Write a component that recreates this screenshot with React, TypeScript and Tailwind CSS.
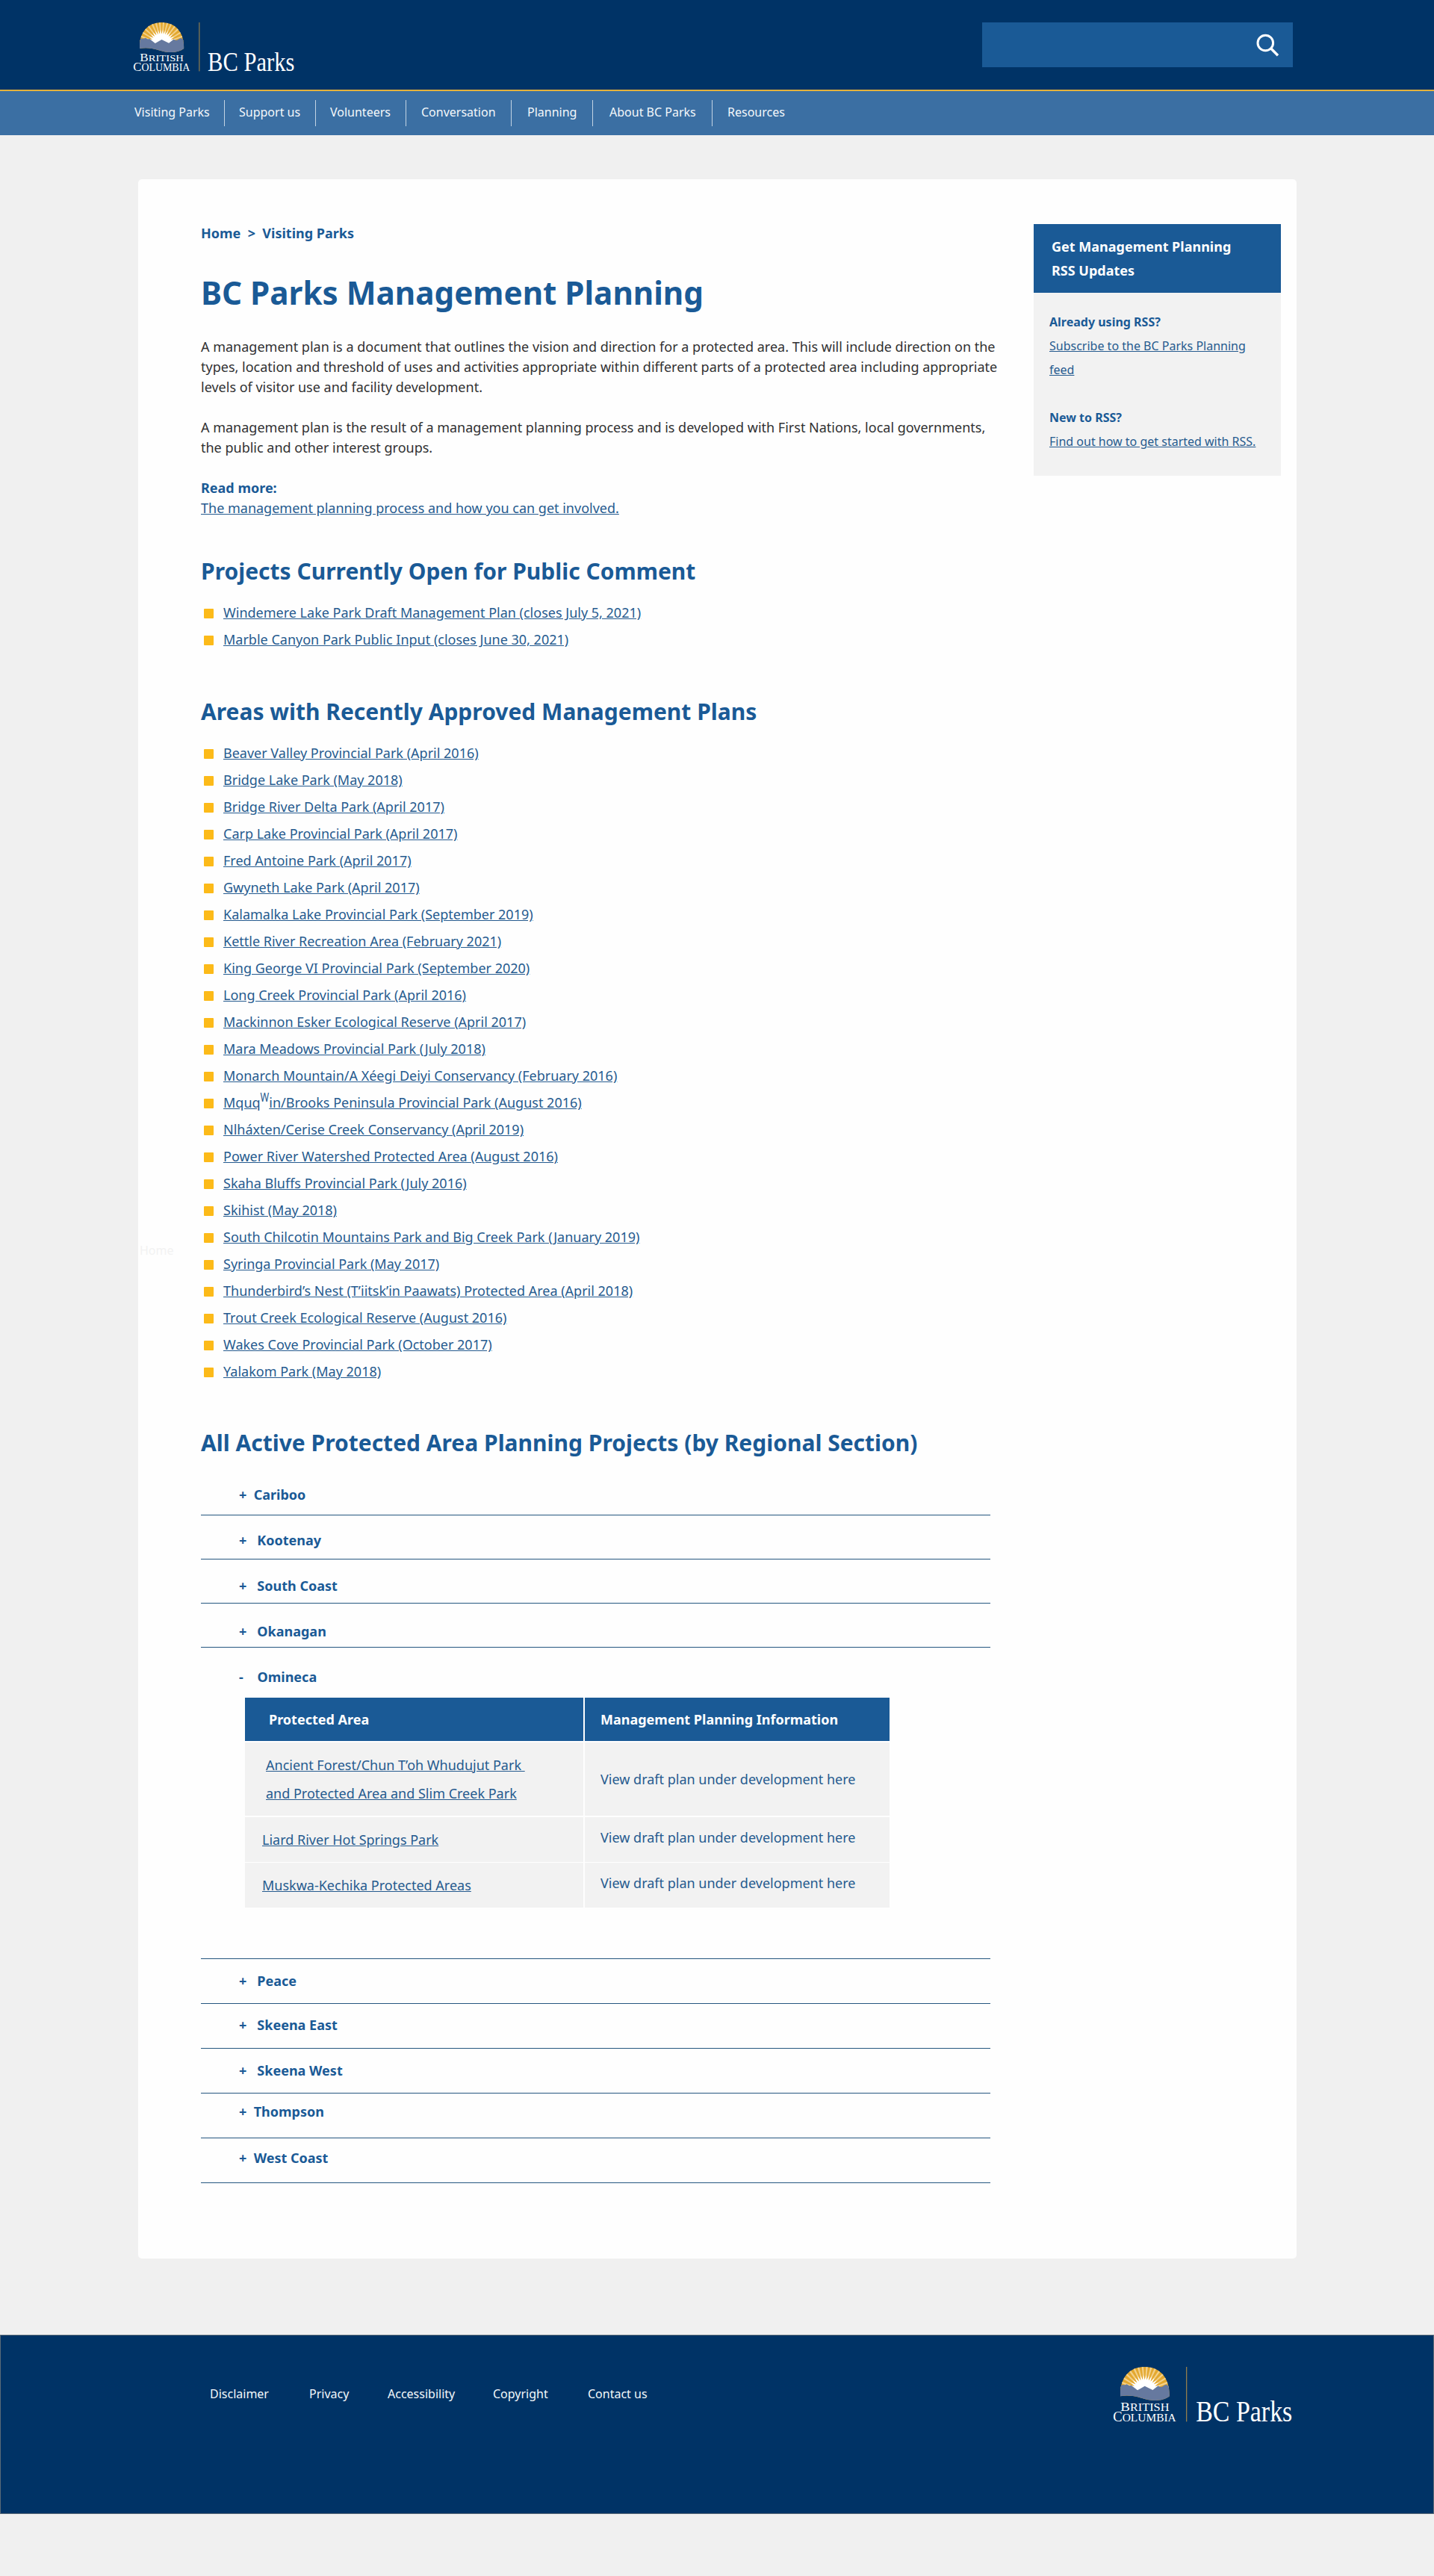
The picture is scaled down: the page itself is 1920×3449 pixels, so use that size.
import React from "react";

const RAY_ANGLES = [-80, -69, -58, -47, -36, -25, -15, -5, 5, 15, 25, 36, 47, 58, 69, 80];

function point(angle: number, radius: number) {
  const a = (angle * Math.PI) / 180;
  return `${(128 + Math.sin(a) * radius).toFixed(1)},${(98 - Math.cos(a) * radius).toFixed(1)}`;
}

const CORE = RAY_ANGLES.map((a, i) => {
  const next = RAY_ANGLES[i + 1] ?? 92;
  return `${point(a, 66)} ${point((a + next) / 2, 46)}`;
}).join(" ");

function Logo({ className }: { className: string }) {
  return (
    <svg viewBox="0 0 722 222" preserveAspectRatio="none" className={className} fontFamily="'Liberation Serif', serif" fill="#fff">
      <clipPath id="arch">
        <path d="M30 118 C27 50 62 0 128 0 C194 0 229 50 227 118 C200 140 155 138 118 126 C80 114 52 114 30 118Z" />
      </clipPath>
      <g clipPath="url(#arch)">
        <rect x="25" y="0" width="206" height="140" fill="#e3a82f" />
        {RAY_ANGLES.map((a) => (
          <polygon key={a} fill="#f3d08a" points={`${point(a - 1.9, 110)} ${point(a + 1.9, 110)} ${point(a + 3.6, 40)} ${point(a - 3.6, 40)}`} />
        ))}
        <polygon fill="#fff" points={`${point(-92, 46)} ${CORE}`} />
        <path
          fill="#66799f"
          d="M20 84 L38 72 L48 73 L56 70 L66 76 L74 74 L99 94 L128 77 L160 93 L182 76 L188 80 L197 80 L206 74 L213 71 L232 80 L232 145 L20 145Z"
        />
      </g>
      <text x="31" y="176" fontSize="50" textLength="195" lengthAdjust="spacingAndGlyphs">
        B<tspan fontSize="43">RITISH</tspan>
      </text>
      <text x="1" y="220" fontSize="55" textLength="253" lengthAdjust="spacingAndGlyphs">
        C<tspan fontSize="46">OLUMBIA</tspan>
      </text>
      <rect x="294" y="0" width="3.4" height="220" fill="#a88a4a" />
      <text x="333" y="220" fontSize="118" textLength="387" lengthAdjust="spacingAndGlyphs">
        BC Parks
      </text>
    </svg>
  );
}

const NAV = [
  { label: "Visiting Parks", cls: "w-[121px]" },
  { label: "Support us", cls: "w-[122px] pl-[19px]" },
  { label: "Volunteers", cls: "w-[121px] pl-[19px]" },
  { label: "Conversation", cls: "w-[141px] pl-5" },
  { label: "Planning", cls: "w-[109px] pl-[21px]" },
  { label: "About BC Parks", cls: "w-[160px] pl-[22px]" },
];

const OPEN_PROJECTS = [
  "Windemere Lake Park Draft Management Plan (closes July 5, 2021)",
  "Marble Canyon Park Public Input (closes June 30, 2021)",
];

const APPROVED: React.ReactNode[] = [
  "Beaver Valley Provincial Park (April 2016)",
  "Bridge Lake Park (May 2018)",
  "Bridge River Delta Park (April 2017)",
  "Carp Lake Provincial Park (April 2017)",
  "Fred Antoine Park (April 2017)",
  "Gwyneth Lake Park (April 2017)",
  "Kalamalka Lake Provincial Park (September 2019)",
  "Kettle River Recreation Area (February 2021)",
  "King George VI Provincial Park (September 2020)",
  "Long Creek Provincial Park (April 2016)",
  "Mackinnon Esker Ecological Reserve (April 2017)",
  "Mara Meadows Provincial Park (July 2018)",
  "Monarch Mountain/A Xéegi Deiyi Conservancy (February 2016)",
  <>
    Mquq<sup className="top-[-7px] mr-[-2px] inline-block origin-bottom-left scale-y-125 align-baseline text-[12.5px] leading-none">W</sup>
    <span className="ml-[2px]">in/Brooks Peninsula Provincial Park (August 2016)</span>
  </>,
  "Nlháxten/Cerise Creek Conservancy (April 2019)",
  "Power River Watershed Protected Area (August 2016)",
  "Skaha Bluffs Provincial Park (July 2016)",
  "Skihist (May 2018)",
  "South Chilcotin Mountains Park and Big Creek Park (January 2019)",
  "Syringa Provincial Park (May 2017)",
  "Thunderbird’s Nest (T’iitsk’in Paawats) Protected Area (April 2018)",
  "Trout Creek Ecological Reserve (August 2016)",
  "Wakes Cove Provincial Park (October 2017)",
  "Yalakom Park (May 2018)",
];

function Link({ children }: { children: React.ReactNode }) {
  return (
    <a href="#" className="whitespace-pre text-[#265b8f] underline">
      {children}
    </a>
  );
}

function Heading({ children, className }: { children: React.ReactNode; className: string }) {
  return <h2 className={`whitespace-nowrap text-[30px] leading-[41px] font-bold text-[#1a5a96] ${className}`}>{children}</h2>;
}

function LinkList({ items }: { items: React.ReactNode[] }) {
  return (
    <ul className="mt-[17px]">
      {items.map((item, i) => (
        <li key={i} className="flex h-9 items-start leading-9">
          <span className="mt-[13px] mr-[13px] ml-1 size-[13px] rounded-[1px] bg-[#fcba19]" />
          <Link>{item}</Link>
        </li>
      ))}
    </ul>
  );
}

function Region({ label, className, children }: { label: string; className: string; children?: React.ReactNode }) {
  return (
    <section className={`w-[1057px] border-b border-[#24567f] ${className}`}>
      <h3 className="pl-[51px] leading-6 font-bold whitespace-pre text-[#1a5a96]">{label}</h3>
      {children}
    </section>
  );
}

function PlanTable() {
  return (
    <div className="mt-4 ml-[59px] grid w-[863px] grid-cols-[453px_408px] gap-x-[2px] leading-6 text-[#265b8f]">
      <div className="h-[58px] bg-[#1a5a96] pt-[17px] pl-8 font-bold text-white">Protected Area</div>
      <div className="h-[58px] bg-[#1a5a96] pt-[17px] pl-[21px] font-bold text-white">Management Planning Information</div>
      <div className="mt-[2px] h-[98px] bg-[#f2f2f2] pt-[11px] pl-7 leading-[38px]">
        <Link>{"Ancient Forest/Chun T’oh Whudujut Park\u00a0\nand Protected Area and Slim Creek Park"}</Link>
      </div>
      <div className="mt-[2px] h-[98px] bg-[#f2f2f2] pt-[37px] pl-[21px]">View draft plan under development here</div>
      <div className="mt-[2px] h-[60px] bg-[#f2f2f2] pt-[18px] pl-[23px]">
        <Link>Liard River Hot Springs Park</Link>
      </div>
      <div className="mt-[2px] h-[60px] bg-[#f2f2f2] pt-[15px] pl-[21px]">View draft plan under development here</div>
      <div className="mt-px h-[60px] bg-[#f2f2f2] pt-[18px] pl-[23px]">
        <Link>Muskwa-Kechika Protected Areas</Link>
      </div>
      <div className="mt-px h-[60px] bg-[#f2f2f2] pt-[15px] pl-[21px]">View draft plan under development here</div>
    </div>
  );
}

export default function App() {
  return (
    <div className="h-[3449px] w-[1920px] bg-[#f0f0f0] font-['Noto_Sans',sans-serif]">
      <header>
        <div className="flex h-[122px] items-start justify-between border-b-2 border-[#e3b13c] bg-[#003366] pt-[30px] pr-[189px] pl-[178px]">
          <Logo className="h-[66px] w-[217px] overflow-visible" />
          <div className="flex h-[60px] w-[416px] justify-end bg-[#1a5a96] pt-[15px] pr-[18px]">
            <svg viewBox="0 0 31 31" className="size-[31px] text-white" fill="none" stroke="currentColor" strokeWidth="3">
              <circle cx="12.3" cy="12.5" r="10.3" />
              <path d="M19.8 20 L29 29.2" strokeWidth="3.4" />
            </svg>
          </div>
        </div>
        <nav className="flex h-[59px] bg-[#3b6fa3] pt-3 pl-[180px] text-base leading-[22px] whitespace-nowrap text-[#f4f8fb]">
          {NAV.map((item) => (
            <a key={item.label} href="#" className={`h-[35px] border-r border-[#c3d4e4] pt-[5px] ${item.cls}`}>
              {item.label}
            </a>
          ))}
          <a href="#" className="pt-[5px] pl-5">
            Resources
          </a>
        </nav>
      </header>

      <main className="relative mt-[59px] ml-[185px] flex h-[2784px] w-[1551px] items-start rounded-[5px] bg-[#fefefe] pl-[84px] text-lg">
        <span className="absolute top-[1423px] left-[2px] text-base leading-[22px] text-[#f2f2f2]">Home</span>
        <div className="w-[1115px] pt-[59px]">
          <p className="leading-[27px] font-bold whitespace-pre text-[#1a5a96]">{"Home  >  Visiting Parks"}</p>
          <h1 className="mt-[37px] text-[42.2px] leading-[57px] font-bold whitespace-nowrap text-[#1a5a96]">
            BC Parks Management Planning
          </h1>
          <div className="mt-[31px] leading-[27px] whitespace-nowrap text-[#313132]">
            <p>
              A management plan is a document that outlines the vision and direction for a protected area. This will include direction on the
              <br />
              types, location and threshold of uses and activities appropriate within different parts of a protected area including appropriate
              <br />
              levels of visitor use and facility development.
            </p>
            <p className="mt-[27px]">
              A management plan is the result of a management planning process and is developed with First Nations, local governments,
              <br />
              the public and other interest groups.
            </p>
            <p className="mt-[27px] font-bold text-[#1a5a96]">Read more:</p>
            <p>
              <Link>The management planning process and how you can get involved.</Link>
            </p>
          </div>

          <Heading className="mt-[50px]">Projects Currently Open for Public Comment</Heading>
          <LinkList items={OPEN_PROJECTS} />

          <Heading className="mt-[58px]">Areas with Recently Approved Management Plans</Heading>
          <LinkList items={APPROVED} />

          <Heading className="mt-[57px]">All Active Protected Area Planning Projects (by Regional Section)</Heading>
          <Region label="+  Cariboo" className="h-[77px] pt-[37px]" />
          <Region label="+   Kootenay" className="h-[59px] pt-[21px]" />
          <Region label="+   South Coast" className="h-[59px] pt-[23px]" />
          <Region label="+   Okanagan" className="h-[59px] pt-[25px]" />
          <Region label="-    Omineca" className="h-[417px] pt-[27px]">
            <PlanTable />
          </Region>
          <Region label="+   Peace" className="h-[60px] pt-[17px]" />
          <Region label="+   Skeena East" className="h-[60px] pt-4" />
          <Region label="+   Skeena West" className="h-[60px] pt-[17px]" />
          <Region label="+  Thompson" className="h-[60px] pt-3" />
          <Region label="+  West Coast" className="h-[60px] pt-[14px]" />
        </div>

        <aside className="mt-[60px] w-[331px] bg-[#f2f2f2]">
          <h2 className="h-[92px] bg-[#1a5a96] pt-[14px] pl-6 leading-8 font-bold text-white">
            Get Management Planning
            <br />
            RSS Updates
          </h2>
          <div className="h-[245px] pt-[23px] pl-[21px] text-base leading-8 whitespace-nowrap">
            <p className="font-bold text-[#1a5a96]">Already using RSS?</p>
            <p>
              <Link>{"Subscribe to the BC Parks Planning\nfeed"}</Link>
            </p>
            <p className="mt-8 font-bold text-[#1a5a96]">New to RSS?</p>
            <p>
              <Link>Find out how to get started with RSS.</Link>
            </p>
          </div>
        </aside>
      </main>

      <footer className="mt-[102px] flex h-[240px] items-start justify-between border border-[#5b6b78] bg-[#003366] pr-[188px] pl-[280px]">
        <nav className="flex pt-[67px] text-base leading-[22px] whitespace-nowrap text-[#f4f8fb]">
          <a href="#" className="w-[133px]">Disclaimer</a>
          <a href="#" className="w-[105px]">Privacy</a>
          <a href="#" className="w-[141px]">Accessibility</a>
          <a href="#" className="w-[127px]">Copyright</a>
          <a href="#">Contact us</a>
        </nav>
        <Logo className="mt-[42px] h-[74px] w-[241px] overflow-visible" />
      </footer>
    </div>
  );
}
